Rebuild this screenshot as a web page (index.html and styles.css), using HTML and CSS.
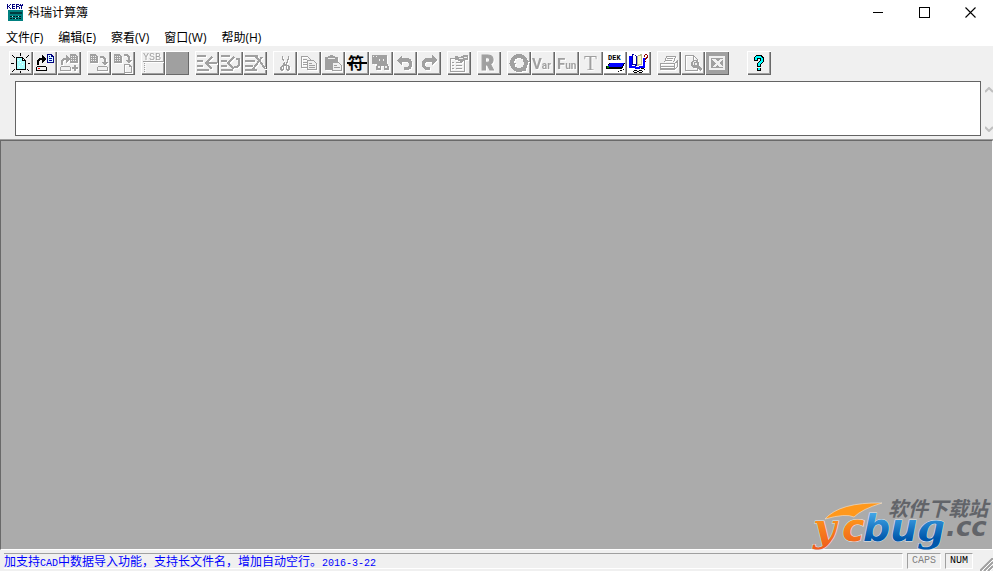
FILE: index.html
```html
<!DOCTYPE html>
<html lang="zh-CN">
<head>
<meta charset="utf-8">
<title>科瑞计算簿</title>
<link rel="stylesheet" href="styles.css">
</head>
<body>
<svg class="defs" aria-hidden="true">
  <defs>
    <g id="drive"><path d="M4 15h9v1h1v4H3v-4h1z" fill="currentColor"/><path d="M4 16h9v3H4z" fill="#f0f0f0"/></g>
    <g id="sheet"><path d="M0 0h6v1h1v1h1v7H0z" fill="currentColor"/><path d="M1 2h1v1H1zM3 2h1v1H3zM5 2h1v1H5zM1 4h1v1H1zM3 4h1v1H3zM5 4h1v1H5zM1 6h1v1H1zM3 6h1v1H3zM5 6h1v1H5z" fill="#f0f0f0"/></g>
    <path id="arrow-up" d="M4 9h1V8h1V7h3V4h1v1h1v1h1v1h1v2h-1v1h-1v1h-1v1H9V9H7v1H6v4H4z" fill="currentColor"/>
    <path id="arrow-down" d="M13 5h4v1h1v1h1v4h2v1h-1v1h-1v1h-2v-1h-1v-1h-1v-1h2V8h-1V7h-3z" fill="currentColor"/>
    <path id="row-lines" d="M2 4h9v2H2zM2 9h6v2H2zM2 14h6v2H2zM2 18h12v2H2z" fill="currentColor"/>
  </defs>
</svg>

<header class="titlebar">
  <svg class="app-icon" viewBox="0 0 16 17" shape-rendering="crispEdges" aria-hidden="true">
    <path d="M0 0h1v2h1V1h1V0h1v1H3v1H2v1h1v1h1v1H3V4H2V3H1v2H0zM5 0h3v1H6v1h2v1H6v1h2v1H5zM9 0h3v1h1v1h-1v1h1v2h-1V3h-2v2H9zM10 1v1h2V1zM13 0h1v1h1V0h1v2h-1v3h-1V2h-1z" fill="#000080"/>
    <path d="M1 6h15v11H1z" fill="#008080"/><path d="M3 8h12v2H3z" fill="#003c40"/>
    <path d="M3 12h2v1H3zM6 12h2v1H6zM9 12h2v1H9zM12 12h2v1h-2zM3 14h2v1H3zM6 14h2v1H6zM9 14h2v1H9zM12 14h2v1h-2z" fill="#001c20"/>
    <path d="M5 12h1v1H5zM8 14h1v1H8zM11 12h1v1h-1z" fill="#b0e8e8"/>
  </svg>
  <h1 class="title">科瑞计算簿</h1>
  <div class="window-controls">
    <button aria-label="最小化"><svg viewBox="0 0 11 11" shape-rendering="crispEdges"><path d="M0 5h10v1H0z"/></svg></button>
    <button aria-label="最大化"><svg viewBox="0 0 11 11" shape-rendering="crispEdges"><path d="M0 0h11v11H0zM1 1v9h9V1z" fill-rule="evenodd"/></svg></button>
    <button aria-label="关闭"><svg viewBox="0 0 11 11"><path d="M.5.5l10 10M10.5.5l-10 10" stroke="#000" stroke-width="1.1"/></svg></button>
  </div>
</header>

<nav class="menubar" aria-label="菜单">
  <button>文件(F)</button>
  <button>编辑(E)</button>
  <button>察看(V)</button>
  <button>窗口(W)</button>
  <button>帮助(H)</button>
</nav>

<div class="toolbar" role="toolbar" aria-label="工具栏">
  <div class="group">
    <button class="tool" aria-label="新建"><svg viewBox="0 0 24 24" shape-rendering="crispEdges"><path d="M7 6h7v1h1v1h1v1h1v10H7z"/><path d="M8 7h5v3h3v8H8z" fill="#a8ffff"/><path d="M14 8h1v1h-1zM9 9h1v1H9zM11 11h1v1h-1zM13 13h1v1h-1zM10 15h1v1h-1z" fill="#fff"/><path d="M11 2h1v3h-1zM11 20h1v2h-1zM2 12h3v1H2zM19 12h2v1h-2zM3 4h1v1H3zM4 5h1v1H4zM5 6h1v1H5zM19 4h1v1h-1zM18 5h1v1h-1zM17 6h1v1h-1zM5 18h1v1H5zM4 19h1v1H4zM3 20h1v1H3zM18 18h1v1h-1zM19 19h1v1h-1z"/></svg></button>
    <button class="tool" aria-label="打开"><svg viewBox="0 0 24 24" shape-rendering="crispEdges"><use href="#arrow-up"/><use href="#drive"/><path d="M5 17h2v1H5z" fill="#f00"/><path d="M14 3h5v1h1v1h1v7h-7z" fill="#000080"/><path d="M15 4h3v2h2v5h-5z" fill="#d8ffff"/><path d="M16 5h1v1h-1zM16 7h3v1h-3zM16 9h3v1h-3z" fill="#0000a0"/></svg></button>
    <button class="tool" disabled aria-label="追加"><svg viewBox="0 0 24 24" shape-rendering="crispEdges"><use href="#arrow-up"/><use href="#drive"/><use href="#sheet" x="13" y="3"/><path d="M17 14h2v2h2v2h-2v2h-2v-2h-2v-2h2z" fill="currentColor"/></svg></button>
  </div>
  <div class="group">
    <button class="tool" disabled aria-label="保存"><svg viewBox="0 0 24 24" shape-rendering="crispEdges"><use href="#sheet" x="3" y="3"/><use href="#arrow-down"/><use href="#drive" x="7"/></svg></button>
    <button class="tool" disabled aria-label="另存为"><svg viewBox="0 0 24 24" shape-rendering="crispEdges"><use href="#sheet" x="3" y="3"/><use href="#arrow-down" y="-2"/><path d="M13 13h6v1h1v1h1v7h-8zM14 14v7h6v-5h-2v-2z" fill="currentColor" fill-rule="evenodd"/></svg></button>
  </div>
  <div class="group">
    <button class="tool" disabled aria-label="预算表"><svg viewBox="0 0 24 24" shape-rendering="crispEdges"><text x="2" y="9" class="mono">YSB</text><path d="M2 10h20v1H2zM3 12h1v1H3zM3 14h1v1H3zM3 16h1v1H3zM3 18h1v1H3zM3 20h1v1H3z" fill="currentColor"/></svg></button>
    <button class="tool solid" disabled aria-label="颜色"></button>
  </div>
  <div class="group">
    <button class="tool" disabled aria-label="插入行"><svg viewBox="0 0 24 24" shape-rendering="crispEdges"><use href="#row-lines"/><path d="M17 6l-6 6 6 6M11 12h11" class="stroke"/></svg></button>
    <button class="tool" disabled aria-label="添加行"><svg viewBox="0 0 24 24" shape-rendering="crispEdges"><use href="#row-lines"/><path d="M15 6l-6 6 6 6M20 8v6l-2 2h-3M17 8h4" class="stroke"/></svg></button>
    <button class="tool" disabled aria-label="删除行"><svg viewBox="0 0 24 24" shape-rendering="crispEdges"><path d="M2 4h13v2H2zM2 9h10v2H2zM2 14h8v2H2zM2 18h12v2H2z" fill="currentColor"/><path d="M11 5q5 2 11 13M19 6l-9 12" class="stroke"/></svg></button>
  </div>
  <div class="group">
    <button class="tool" disabled aria-label="剪切"><svg viewBox="0 0 24 24" shape-rendering="crispEdges"><path d="M9 5h1v3h1v3h1v2h1v-2h1V8h1V5h1v4h-1v3h-1v2h2v1h1v4h-1v1h-2v-1h-1v-4h-2v4h-1v1H8v-1H7v-3h1v-1h1v-1h1v-2h1v-2h-1V9H9zM9 16v2h1v-2zM14 15v3h1v-3z" fill="currentColor" fill-rule="evenodd"/></svg></button>
    <button class="tool" disabled aria-label="复制"><svg viewBox="0 0 24 24" shape-rendering="crispEdges"><path d="M4.500 5.500h6l3 3v8h-9zM6 8.500h4M6 11.500h5M6 13.500h4" class="thin"/><path d="M10.500 9.500h6l3 3v6h-9zM12 12.500h3M12 14.500h6M12 16.500h6" class="thin page"/></svg></button>
    <button class="tool" disabled aria-label="粘贴"><svg viewBox="0 0 24 24" shape-rendering="crispEdges"><path d="M4 6h3V5h2V4h3v1h2v1h3v5h-6v8H4z" fill="currentColor"/><path d="M7 7h7v1H7z" fill="#f0f0f0"/><path d="M11.500 11.500h6l3 3v5h-9zM13 14.500h3M13 16.500h6" class="thin page"/></svg></button>
    <button class="tool" aria-label="符号"><svg viewBox="0 0 24 24"><text x="3" y="18" class="glyph">符</text><path d="M2 11h20v2H2z"/></svg></button>
    <button class="tool" disabled aria-label="查找"><svg viewBox="0 0 24 24" shape-rendering="crispEdges"><path d="M3 4h15v9h1v2h1v4h-5v-4h-3v4H7v-4h1v-2H3z" fill="currentColor"/><path d="M5 13h1v1H5zM10 8h1v2h-1zM14 8h1v2h-1zM9 15h2v2H9zM16 15h2v2h-2zM4 5h1v1H4zM7 5h1v1H7z" fill="#f0f0f0"/></svg></button>
    <button class="tool" disabled aria-label="撤消"><svg viewBox="0 0 24 24" shape-rendering="crispEdges"><path d="M4 9l5-5v3h6q4 1 4 6t-4 6h-4v-3h3q2-1 2-3t-3-2H9v4z" fill="currentColor"/></svg></button>
    <button class="tool" disabled aria-label="重做"><svg viewBox="0 0 24 24" shape-rendering="crispEdges"><path d="M20 9l-5-5v3H9q-4 1-4 6t4 6h4v-3h-3q-2-1-2-3t3-2h4v4z" fill="currentColor"/></svg></button>
  </div>
  <div class="group">
    <button class="tool" disabled aria-label="属性"><svg viewBox="0 0 24 24" shape-rendering="crispEdges"><path d="M3.500 7.500h14v13h-14zM5 11.500h2M9 11.500h6M5 14.500h2M9 14.500h6M5 17.500h2M9 17.500h6" class="thin"/><path d="M8 5h3v1h3V5h2V4h5v5h-4v1h-1v1h-3v-1h-2V9H8z" fill="currentColor"/><path d="M12 7h4v1h-4zM17 6h3v1h-3z" fill="#f0f0f0"/></svg></button>
  </div>
  <div class="group">
    <button class="tool" disabled aria-label="R"><svg viewBox="0 0 24 24"><text x="4" y="19" class="heavy">R</text></svg></button>
  </div>
  <div class="group">
    <button class="tool" disabled aria-label="循环"><svg viewBox="0 0 24 24" shape-rendering="crispEdges"><circle cx="12" cy="12" r="7" fill="none" stroke="currentColor" stroke-width="4"/><path d="M2 12h7l-4 4zM15 11h7l-3-3zM15 17h4v3h-4z" fill="currentColor"/></svg></button>
    <button class="tool" disabled aria-label="变量"><svg viewBox="0 0 24 24"><text x="1" y="18" class="word"><tspan class="cap">V</tspan><tspan>ar</tspan></text></svg></button>
    <button class="tool" disabled aria-label="函数"><svg viewBox="0 0 24 24"><text x="2" y="18" class="word"><tspan class="cap">F</tspan><tspan>un</tspan></text></svg></button>
    <button class="tool" disabled aria-label="文本"><svg viewBox="0 0 24 24"><text x="5" y="19" class="serif">T</text></svg></button>
    <button class="tool white" aria-label="DEK"><svg viewBox="0 0 24 24" shape-rendering="crispEdges"><text x="5" y="9" class="dek">DEK</text><path d="M6 12h16v1h-1v2h-1v2h-1v1H3v-3h2v-2h1z"/><path d="M7 12h14v1h-1v2h-1v1H5v-2h1z" fill="#0000ff"/><path d="M4 15h2v2H4z" fill="#008000"/><path d="M17 19h2v1h-2zM20 18h1v1h-1zM15 20h1v1h-1z"/></svg></button>
    <button class="tool white" aria-label="使用手册"><svg viewBox="0 0 24 24" shape-rendering="crispEdges"><path d="M2 5h3v10h4v1h3v-1h4V7h2v10h-5v1H8v-1H2z" fill="#0000ff"/><path d="M5 3h2v1h2v1h1v9h1v1H8v-1H5z" fill="#0000a0"/><path d="M6 4h2v1h1v8H6z" fill="#fff"/><path d="M10 5h1V4h2V3h2v11h-3v1h-2z" fill="#b8b890"/><path d="M11 5h3v8h-3z" fill="#ffffc0"/><path d="M17 4h1V3h2v1h1v3h-1v1h-1v1h-1V7h1V6h1V4h-2v2h-1zM18 10h1v1h-1z" fill="#900000"/><path d="M7 19h3v1H7zM6 20h1v1H6zM10 20h2v1h-2zM7 21h3v1H7zM12 19h3v1h-3zM15 20h1v1h-1zM12 21h3v1h-3zM14 17h3v1h1v1h-1v-1h-3z"/></svg></button>
  </div>
  <div class="group">
    <button class="tool" disabled aria-label="打印"><svg viewBox="0 0 24 24" shape-rendering="crispEdges"><path d="M7.500 11.500l2-6h9l-2 6M10 7.500h6M9 9.500h6M3.500 12.500h14v6h-14zM17.500 12.500l3-3v6l-3 3M4 15.500h13M18 11.500h3" class="thin"/><path d="M4 17h13v2H4z" fill="currentColor"/></svg></button>
    <button class="tool" disabled aria-label="打印预览"><svg viewBox="0 0 24 24" shape-rendering="crispEdges"><path d="M4.500 4.500h8l4 4v11h-12zM12.500 5v4h4" class="thin"/><path d="M12 9h4v1h1v1h1v4h1v1h1v1h1v2h-1v1h-1v-1h-1v-1h-1v-1h-5v-1h-1v-1h-1v-4h1v-1h1z" fill="currentColor"/><path d="M13 10h2v1h-2zM12 11h1v3h-1zM14 12h2v2h-2z" fill="#f0f0f0"/></svg></button>
    <button class="tool solid" disabled aria-label="导出 Excel"><svg viewBox="0 0 24 24" shape-rendering="crispEdges"><path d="M4 5h16v14H4zM6 7v10h12V7z" fill="#f0f0f0" fill-rule="evenodd"/><path d="M7 8h4l7 8h-4z" fill="#f0f0f0"/><path d="M15 8h3l-8 8H7z" fill="#f0f0f0"/></svg></button>
  </div>
  <div class="group help">
    <button class="tool" aria-label="帮助"><svg viewBox="0 0 24 24" shape-rendering="crispEdges"><path d="M9 4h6v1h1v1h1v5h-1v1h-1v1h-1v3h-4v-4h1v-1h1v-1h1V8h-2v2H7V6h1V5h1zM10 17h4v3h-4z"/><path d="M9 5h5v1h1v1h1v4h-1v1h-1v1h-1v2h-2v-3h1v-1h1v-1h1V7H10v2H8V6h1zM11 17h2v2h-2z" fill="#00ffff"/></svg></button>
  </div>
</div>

<div class="formula">
  <textarea aria-label="算式"></textarea>
  <div class="spin">
    <button aria-label="向上"><svg viewBox="0 0 8 6"><path d="M0 5l4-4 4 4" /></svg></button>
    <button aria-label="向下"><svg viewBox="0 0 8 6"><path d="M0 1l4 4 4-4" /></svg></button>
  </div>
</div>

<main class="workspace">
  <svg class="logo" viewBox="0 0 184 54" role="img" aria-label="ycbug.cc 软件下载站">
    <defs>
      <linearGradient id="orange" x1="0" y1="0" x2="0" y2="1"><stop offset=".2" stop-color="#ff9c1c"/><stop offset="1" stop-color="#ee5a1c"/></linearGradient>
      <linearGradient id="blue" x1="0" y1="0" x2="0" y2="1"><stop offset=".15" stop-color="#44a8e8"/><stop offset=".75" stop-color="#0058ac"/></linearGradient>
    </defs>
    <path d="M17 20Q32 3 74 4Q54 10 46 18Q38 14 17 20z" fill="#ff981c" stroke="#f5e4d0" stroke-width=".6"/>
    <text class="brand curved" x="5" y="42" fill="url(#orange)">y</text>
    <text class="brand" x="34" y="42" fill="url(#orange)">c</text>
    <text class="brand" x="55" y="42" fill="url(#blue)">bu</text>
    <text class="brand curved" x="109" y="42" fill="url(#blue)">g</text>
    <text class="domain" x="138" y="37">.cc</text>
    <text class="site" x="80" y="17">软件下载站</text>
  </svg>
</main>

<footer class="statusbar">
  <div class="pane message">加支持<span>CAD</span>中数据导入功能，支持长文件名，增加自动空行。<span>2016-3-22</span></div>
  <div class="pane key off">CAPS</div>
  <div class="pane key">NUM</div>
  <svg class="grip" viewBox="0 0 13 13" aria-hidden="true"><path d="M0 13L13 0M4 13l9-9M8 13l5-5" stroke="#a0a0a0" stroke-width="2"/><path d="M2 13L13 2M6 13l7-7M10 13l3-3" stroke="#fff"/></svg>
</footer>
</body>
</html>
```
FILE: styles.css
```css
* { box-sizing: border-box; }

body {
  margin: 0;
  height: 100vh;
  display: flex;
  flex-direction: column;
  overflow: hidden;
  background: #f0f0f0;
  color: #000;
  font: 12px/16px "Open Sans", "Noto Sans CJK SC", sans-serif;
}

button {
  margin: 0;
  padding: 0;
  border: 0;
  background: none;
  color: inherit;
  font: inherit;
}

svg { display: block; }
.defs { position: absolute; width: 0; height: 0; }

.titlebar {
  display: flex;
  align-items: center;
  height: 24px;
  padding-left: 7px;
  background: #fff;
}
.app-icon { width: 16px; height: 17px; }
.title { margin: 0 0 0 5px; padding-top: 2px; font-size: 12px; font-weight: 400; }
.window-controls { display: flex; margin-left: auto; }
.window-controls button {
  display: grid;
  place-items: center;
  width: 46px;
  height: 24px;
}
.window-controls svg { width: 11px; height: 11px; }

.menubar {
  display: flex;
  gap: 15px;
  height: 22px;
  padding: 5px 6px 0;
  background: #fff;
}
.menubar button { height: 17px; }

.toolbar {
  display: flex;
  gap: 6px;
  padding: 5px 9px;
}
.group { display: flex; }
.help { margin-left: 12px; }
.tool {
  width: 24px;
  height: 24px;
  background: #f0f0f0;
  box-shadow: inset 1px 1px #fff, inset -1px -1px #696969, inset -2px -2px #a0a0a0;
}
.tool svg { width: 24px; height: 24px; }
.tool:disabled { color: #a0a0a0; }
.tool:disabled svg { filter: drop-shadow(1px 1px 0 #fff); }
.white { background: #fff; }
.tool.solid { background: #a0a0a0; }
.tool.solid svg { filter: none; }

.tool text { fill: currentColor; }
.stroke { fill: none; stroke: currentColor; stroke-width: 2; }
.thin { fill: none; stroke: currentColor; stroke-width: 1; }
.thin.page { fill: #f0f0f0; }
.mono { font: 10px "Liberation Mono", monospace; }
.dek { font: bold 7px "Liberation Mono", monospace; }
.glyph { font: bold 16px "Noto Sans CJK SC", sans-serif; }
.heavy { font: 900 20px Roboto, sans-serif; stroke: currentColor; }
.word { font: bold 10px Roboto, sans-serif; }
.cap { font-size: 15px; }
.serif { font: 21px "Liberation Serif", serif; }

.formula {
  display: flex;
  gap: 4px;
  height: 60px;
  padding: 1px 0 4px 15px;
}
.formula textarea {
  flex: 1;
  min-width: 0;
  height: 55px;
  border: 1px solid #646464;
  border-radius: 0;
  background: #fff;
  resize: none;
  outline: 0;
}
.spin {
  display: flex;
  flex-direction: column;
  justify-content: space-between;
  padding: 6px 0 4px;
}
.spin svg { width: 8px; height: 6px; fill: none; stroke: #bfbfbf; stroke-width: 2; }

.workspace {
  flex: 1;
  display: flex;
  align-items: flex-end;
  justify-content: flex-end;
  min-height: 0;
  border-style: solid;
  border-width: 1px;
  border-color: #696969 #fff #fff #696969;
  background: #ababab;
  box-shadow: 0 -1px #a0a0a0;
}
.logo { width: 184px; height: 54px; margin-bottom: -4px; overflow: visible; position: relative; }
.brand {
  font: italic bold 38px "DejaVu Sans", sans-serif;
  stroke: #e0e8f0;
  stroke-width: 1px;
  paint-order: stroke;
}
.curved { font: italic bold 40px "DejaVu Serif", serif; }
.domain { font: italic bold 26px "DejaVu Sans", sans-serif; fill: #626469; }
.site { font: italic bold 20px "Noto Sans CJK SC", sans-serif; fill: #626469; }

.statusbar {
  display: flex;
  gap: 4px;
  height: 21px;
  padding: 3px 0 2px 4px;
}
.pane {
  height: 16px;
  border: 1px solid;
  border-color: #a0a0a0 #fff #fff #a0a0a0;
  line-height: 14px;
  white-space: nowrap;
}
.message {
  flex: 1;
  min-width: 0;
  overflow: hidden;
  border-left: 0;
  color: #0000ff;
  font-family: "Noto Sans CJK SC", sans-serif;
}
.message span, .key { font-family: "Liberation Mono", monospace; font-size: 10px; }
.key { padding: 0 4px; }
.off { color: #808080; }
.grip { width: 13px; height: 13px; margin: 5px 0 0 3px; }
```
